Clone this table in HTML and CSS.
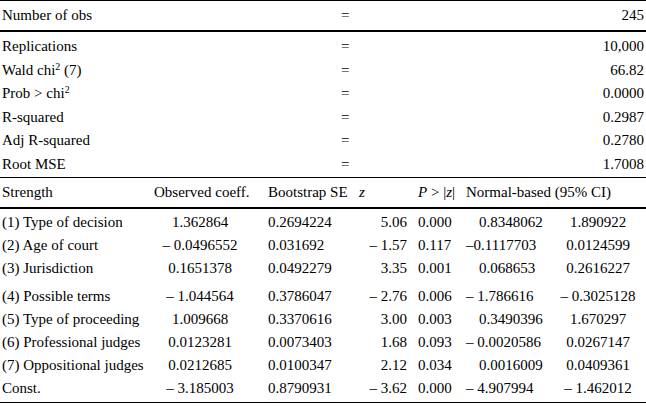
FILE: index.html
```html
<!DOCTYPE html>
<html lang="en">
<head>
<meta charset="utf-8">
<title>Bootstrap regression results</title>
<link rel="stylesheet" href="styles.css">
</head>
<body>
<div class="stats">
  <div class="srow first"><span class="lab">Number of obs</span><span class="eq">=</span><span class="val">245</span></div>
  <div class="sgroup">
    <div class="srow"><span class="lab">Replications</span><span class="eq">=</span><span class="val">10,000</span></div>
    <div class="srow"><span class="lab">Wald chi<sup>2</sup> (7)</span><span class="eq">=</span><span class="val">66.82</span></div>
    <div class="srow"><span class="lab">Prob &gt; chi<sup>2</sup></span><span class="eq">=</span><span class="val">0.0000</span></div>
    <div class="srow"><span class="lab">R-squared</span><span class="eq">=</span><span class="val">0.2987</span></div>
    <div class="srow"><span class="lab">Adj R-squared</span><span class="eq">=</span><span class="val">0.2780</span></div>
    <div class="srow"><span class="lab">Root MSE</span><span class="eq">=</span><span class="val">1.7008</span></div>
  </div>
</div>
<div class="reg">
  <div class="rrow head">
    <span class="c1">Strength</span>
    <span class="c2h">Observed coeff.</span>
    <span class="c3">Bootstrap SE</span>
    <span class="c4h"><i>z</i></span>
    <span class="c5h"><i>P</i> &gt; |<i>z</i>|</span>
    <span class="c6h">Normal-based (95% CI)</span>
  </div>
  <div class="rgroup">
    <div class="rrow"><span class="c1">(1) Type of decision</span><span class="c2">1.362864</span><span class="c3">0.2694224</span><span class="c4">5.06</span><span class="c5">0.000</span><span class="c6">0.8348062</span><span class="c7">1.890922</span></div>
    <div class="rrow"><span class="c1">(2) Age of court</span><span class="c2">– 0.0496552</span><span class="c3">0.031692</span><span class="c4">– 1.57</span><span class="c5">0.117</span><span class="c6 neg">–0.1117703</span><span class="c7">0.0124599</span></div>
    <div class="rrow"><span class="c1">(3) Jurisdiction</span><span class="c2">0.1651378</span><span class="c3">0.0492279</span><span class="c4">3.35</span><span class="c5">0.001</span><span class="c6">0.068653</span><span class="c7">0.2616227</span></div>
  </div>
  <div class="rgroup second">
    <div class="rrow"><span class="c1">(4) Possible terms</span><span class="c2">– 1.044564</span><span class="c3">0.3786047</span><span class="c4">– 2.76</span><span class="c5">0.006</span><span class="c6 neg">– 1.786616</span><span class="c7">– 0.3025128</span></div>
    <div class="rrow"><span class="c1">(5) Type of proceeding</span><span class="c2">1.009668</span><span class="c3">0.3370616</span><span class="c4">3.00</span><span class="c5">0.003</span><span class="c6">0.3490396</span><span class="c7">1.670297</span></div>
    <div class="rrow"><span class="c1">(6) Professional judges</span><span class="c2">0.0123281</span><span class="c3">0.0073403</span><span class="c4">1.68</span><span class="c5">0.093</span><span class="c6 neg">– 0.0020586</span><span class="c7">0.0267147</span></div>
    <div class="rrow"><span class="c1">(7) Oppositional judges</span><span class="c2">0.0212685</span><span class="c3">0.0100347</span><span class="c4">2.12</span><span class="c5">0.034</span><span class="c6">0.0016009</span><span class="c7">0.0409361</span></div>
    <div class="rrow"><span class="c1">Const.</span><span class="c2">– 3.185003</span><span class="c3">0.8790931</span><span class="c4">– 3.62</span><span class="c5">0.000</span><span class="c6 neg">– 4.907994</span><span class="c7">– 1.462012</span></div>
  </div>
</div>
</body>
</html>
```
FILE: styles.css
```css
html, body {
  margin: 0;
  padding: 0;
  background: #ffffff;
}
body {
  font-family: "Liberation Serif", "Times New Roman", serif;
  font-size: 15px;
  color: #000000;
  width: 646px;
}
sup {
  font-size: 10px;
  line-height: 0;
  vertical-align: 5px;
}
.stats {
  border-top: 1px solid #000;
}
.srow {
  display: grid;
  grid-template-columns: 341px 1fr auto;
  height: 23.5px;
  line-height: 23.5px;
  padding: 0 2px;
  white-space: nowrap;
}
.srow.first {
  height: 29px;
  line-height: 29px;
  border-bottom: 2px solid #000;
}
.sgroup {
  padding-top: 3px;
  padding-bottom: 1px;
  border-bottom: 1px solid #000;
}
.eq {
  margin-left: -2px;
}
.val {
  text-align: right;
}
.rrow {
  display: grid;
  grid-template-columns: 152px 116px 88px 54px 54px 91px 91px;
  height: 23px;
  line-height: 23px;
  white-space: nowrap;
}
.rrow.head {
  height: 29px;
  line-height: 29px;
  border-bottom: 2px solid #000;
}
.rgroup {
  padding-top: 1.5px;
}
.rgroup.second {
  padding-top: 5px;
  padding-bottom: 2.5px;
  border-bottom: 1px solid #000;
}
.c1 {
  padding-left: 2px;
}
.c2 {
  text-align: center;
  padding-right: 20px;
}
.c2h {
  padding-left: 2px;
}
.c3 {
  padding-left: 0;
}
.c4 {
  text-align: right;
  padding-right: 3px;
}
.c4h {
  padding-left: 3px;
}
.c5 {
  padding-left: 8px;
}
.c5h {
  padding-left: 8px;
}
.c6 {
  padding-left: 15px;
}
.c6.neg {
  padding-left: 2px;
}
.c6h {
  grid-column: 6 / 8;
  padding-left: 2px;
}
.c7 {
  text-align: center;
  padding-right: 5px;
}
```
